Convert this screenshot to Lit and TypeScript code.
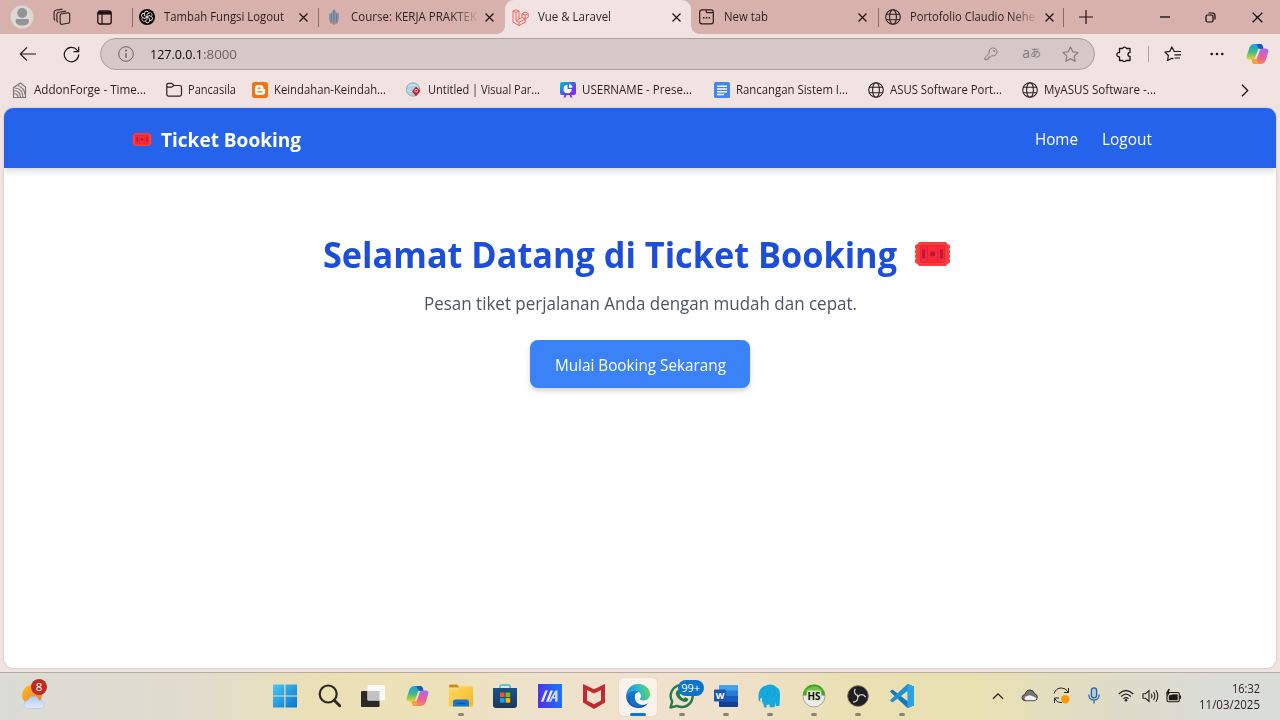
import { LitElement, html, css, svg } from "lit";
import { customElement, property } from "lit/decorators.js";

/** One line of text condensed or widened so that it fills a given width. */
@customElement("fit-text")
class FitText extends LitElement {
  @property({ type: Number }) w = 0;
  @property() text = "";
  static styles = css`
    :host { display: inline-block; white-space: pre; flex: none; }
    .t { display: inline-block; transform-origin: 0 50%; }
  `;
  render() {
    return html`<span class="t">${this.text}</span>`;
  }
  updated() {
    const el = this.renderRoot.querySelector(".t") as HTMLElement;
    const natural = el.offsetWidth ? el.getBoundingClientRect().width : this.w;
    el.style.transform = `scaleX(${this.w / natural})`;
    el.style.marginRight = this.w - natural + "px";
  }
}

const T = (text: string, w: number) => html`<fit-text .text=${text} .w=${w}></fit-text>`;
const I = (w: number, h: number, vb: string, body: unknown) =>
  html`<svg width=${w} height=${h} viewBox=${vb} fill="none">${body}</svg>`;

const cross = I(9, 9, "0 0 9 9", svg`<path d="M.5 .5l8 8M8.500 .5l-8 8" stroke="#1d1212" stroke-width="1.15"/>`);
const globe = I(16, 16, "0 0 16 16", svg`<g stroke="#2b2020" stroke-width="1.1"><circle cx="8" cy="8" r="7.300"/><ellipse cx="8" cy="8" rx="3.400" ry="7.300"/><path d="M1.300 5.300h13.400M1.300 10.700h13.400"/></g>`);
const openai = I(16, 16, "0 0 16 16", svg`<circle cx="8" cy="8" r="8" fill="#080606"/><g stroke="#e8dede" stroke-width=".9">${[0, 60, 120, 180, 240, 300].map((a) => svg`<path d="M8 7.900V5.200l2.200-1.300c2-.9 3.700 1.600 2.300 3.200" transform="rotate(${a} 8 8)"/>`)}</g>`);
const flame = I(16, 16, "0 0 16 16", svg`<path d="M8 0C9.500 2 11 3 11 4.500c1 0 1.800-.7 1.800-.7.600 4 .2 8-1.500 10.500L8 15.800l-3.300-1.500C3 12 2.700 8 3.300 4c.6.500 1.200.7 1.700.5C5.500 3 7 2 8 0z" fill="#8795a8"/><path d="M8 1v14M5.300 5v9M10.700 5v9" stroke="#65788f" stroke-width=".9"/><path d="M4 12c2 2 6 2 8 0l-1 2.500-3 1.300-3-1.300z" fill="#b1878b"/>`);
const laravel = I(17, 17, "0 0 17 17", svg`<path d="M1 2l3-1.300L7 2v8l3-1.600V4.700L13.200 3l3 1.600v3.700L13.200 10v3.200L7 16.500l-6-3.300zM1 2l3 1.500L7 2M4 3.500v8.300L7 10M4 11.800l3 1.500 6.200-3.300M7 13.300v3.200M10 4.700l3.200 1.700 3-1.800M13.200 6.400V10M10 8.400l3.200 1.600" stroke="#f0625d" stroke-width="1"/>`);
const newtab = I(15, 16, "0 0 15 16", svg`<g stroke="#2b1c1b" stroke-width="1.200"><rect x=".7" y=".9" width="13.600" height="13.900" rx="2.300"/><path d="M7.300 1v1.800q0 .9 .9 .9h6"/></g><path d="M4 8.800h1.500M6.800 8.800h1.500M9.600 8.800h1.500" stroke="#1d1212" stroke-width="1.600"/>`);

const tabs = [
  { icon: openai, text: "Tambah Fungsi Logout", w: 120, cls: "sep" },
  { icon: flame, text: "Course: KERJA PRAKTEK", w: 126, cls: "sep fade" },
  { icon: laravel, text: "Vue & Laravel", w: 73, cls: "active" },
  { icon: newtab, text: "New tab", w: 44, cls: "" },
  { icon: globe, text: "Portofolio Claudio Nehe", w: 125, cls: "sep fade" },
];

const addon = I(16, 17, "0 0 16 17", svg`<path d="M1.500 5.500L8.500 1l5 4v10.500h-12zM2 8.500c4 0 6.500 3 6.500 7M2 11.500c2.500 0 4 1.500 4 4M3 6c5 0 8 4 8 9.500M6 3.500c4 1.500 6.500 5 7 9" stroke="#807876" stroke-width="1.200"/>`);
const folder = I(17, 16, "0 0 17 16", svg`<path d="M.8 4.500V3q0-1.700 1.700-1.700h3.200L8 3.500h5.700q1.800 0 1.800 1.800v7q0 1.800-1.800 1.800H2.600Q.8 14.100.8 12.300zM.8 5.200h4.700L8 3.500" stroke="#2b2020" stroke-width="1.200"/>`);
const blogger = I(16, 16, "0 0 16 16", svg`<rect width="16" height="16" rx="2.500" fill="#f5720f"/><path d="M5.800 3h2.600c2 0 3 1.300 3 3 0 .9.300 1.100 1 1.100.5 0 .7.300.7.700v2.300c0 1.800-1.300 3-3 3H5.900c-1.800 0-3-1.200-3-3V6c0-1.800 1.200-3 2.900-3z" fill="#fff"/><path d="M5.900 6.200h2.300M5.900 9.800h4" stroke="#f5720f" stroke-width="1.300" stroke-linecap="round"/>`);
const visual = I(16, 16, "0 0 16 16", svg`<circle cx="7" cy="7.500" r="6.700" fill="#a9d2e2" stroke="#7b98a6" stroke-width=".7"/><path d="M2 4.500c3-2 7-2 10 0M1 8c3 2 7 2 10 0" stroke="#d9eff6" stroke-width="1"/><path d="M10 4.500l4.500 4.200-4.500 5.500L6 9.500z" fill="#c8202c"/><circle cx="10.200" cy="8.700" r="1.700" fill="#f6d4d4"/><circle cx="10.200" cy="8.700" r=".9" fill="#b51b26"/>`);
const present = I(16, 16, "0 0 16 16", svg`<defs><linearGradient id="pr" x1="0" y1="0" x2=".8" y2="1"><stop stop-color="#0ec2d2"/><stop offset=".25" stop-color="#1897df"/><stop offset=".6" stop-color="#5848ec"/><stop offset="1" stop-color="#9a22ea"/></linearGradient></defs><path d="M2 0h12q2 0 2 2v9q0 2-2 2h-2.500l1 2.500H10.500L9.500 13h-3l-1 2.500H3.500l1-2.500H2q-2 0-2-2V2q0-2 2-2z" fill="url(#pr)"/><path d="M7.500 3v4h4.200a4.100 4.100 0 1 1-4.200-4z" fill="#fff"/><path d="M9 2.200a3.700 3.700 0 0 1 3.500 3.500H9z" fill="#fff"/>`);
const docs = I(16, 16, "0 0 16 16", svg`<rect width="16" height="16" rx="1.500" fill="#4285f4"/><path d="M3 4.200h10M3 7h10M3 9.800h10M3 12.500h7" stroke="#fff" stroke-width="1.400"/>`);

const marks = [
  { icon: addon, text: "AddonForge - Time...", w: 112, c: 154 },
  { icon: folder, text: "Pancasila", w: 48, c: 86 },
  { icon: blogger, text: "Keindahan-Keindah...", w: 112, c: 154 },
  { icon: visual, text: "Untitled | Visual Par...", w: 112, c: 154 },
  { icon: present, text: "USERNAME - Prese...", w: 110, c: 154 },
  { icon: docs, text: "Rancangan Sistem I...", w: 112, c: 154 },
  { icon: globe, text: "ASUS Software Port...", w: 112, c: 154 },
  { icon: globe, text: "MyASUS Software -...", w: 112, c: 154 },
];

const copilot = (id: string) => I(23, 22, "0 0 23 22", svg`<defs>
  <linearGradient id="${id}a" x1="0" y1="0" x2="0" y2="1"><stop stop-color="#1b9fe6"/><stop offset=".5" stop-color="#3cb98a"/><stop offset="1" stop-color="#e8d624"/></linearGradient>
  <linearGradient id="${id}b" x1=".6" y1="0" x2=".3" y2="1"><stop stop-color="#a66bee"/><stop offset=".5" stop-color="#ec5d9b"/><stop offset="1" stop-color="#f98c50"/></linearGradient></defs>
  <path d="M9 1h5.500q1.500 0 2 1.500L17.300 5h-2.800q-2 0-2.600 2L9.300 14.500q-.7 2-2.600 2H3.500Q0 16.500.7 13L3.300 5Q4.500 1 9 1z" fill="url(#${id}a)"/>
  <path d="M9 1h5.500q1.500 0 2 1.500L17.600 6h-3.300q-2-.2-2.600-2L11 1.800Q10.500 1 9 1z" fill="#1558c6"/>
  <path d="M14 21H8.500q-1.500 0-2-1.500L5.700 17h2.800q2 0 2.600-2l2.600-7.500q.7-2 2.600-2h3.200q3.500 0 2.800 3.500L19.700 17q-1.200 4-5.700 4z" fill="url(#${id}b)"/>
  <path d="M14 21H8.500q-1.500 0-2-1.500L5.400 16h3.300q2 .2 2.600 2l.7 2.200q.5.800 2 .8z" fill="#f8a13c"/>`);

const ticket = (w: number, h: number) => html`<svg width=${w} height=${h} viewBox="0 0 37 24" preserveAspectRatio="none">
  <path d="M5 0h27q1 2.500 4 3.500v2.700q-1.700 1 0 2.300v2.200q-1.700 1.200 0 2.400v2.300q-1.700 1.200 0 2.300v2.800q-3 1-4 3.500H5q-1-2.500-4-3.500v-2.800q1.700-1.100 0-2.300v-2.300q1.700-1.200 0-2.400V8.500q1.700-1.300 0-2.300V3.500q3-1 4-3.500z" fill="#fb3d3a"/>
  <rect x="6.500" y="3.500" width="24" height="17" rx="1.500" fill="#f52a3a" stroke="#d9243a" stroke-width=".8"/>
  <path d="M13.500 4v16M23.700 4v16" stroke="#d2203a" stroke-width=".7"/>
  <rect x="8.200" y="7.200" width="2.900" height="9.600" rx=".8" fill="#bb1739"/><rect x="26" y="7.200" width="2.900" height="9.600" rx=".8" fill="#bb1739"/><circle cx="18.600" cy="11.900" r="2.600" fill="#bb1739"/></svg>`;

const apps = [
  { dot: "", icon: I(24, 24, "0 0 24 24", svg`<defs><linearGradient id="wi" x1="0" y1="0" x2="1" y2="1"><stop stop-color="#4ac8f3"/><stop offset="1" stop-color="#0673cf"/></linearGradient></defs><path d="M0 .5h11.300v11H0zM12.500 .5H24v11H12.500zM0 12.500h11.300v11H0zM12.500 12.500H24v11H12.500z" fill="url(#wi)"/>`) },
  { dot: "", icon: I(24, 24, "0 0 24 24", svg`<g stroke="#2a2825" stroke-width="2.200" transform="translate(1.500 0)"><circle cx="9.700" cy="10" r="8.500"/><path d="M15.700 16.300l5.500 5.500" stroke-width="2.900" stroke-linecap="round"/></g>`) },
  { dot: "", icon: I(24, 24, "0 0 24 24", svg`<rect x="0" y="7" width="18.500" height="16" rx="1" fill="#2b2a29"/><rect x="6.500" y="1" width="17.500" height="15.500" rx="1" fill="#fafafa"/><path d="M6.500 7h12v9.500h-11q-1 0-1-1z" fill="#c4c3c1"/>`) },
  { dot: "", icon: copilot("tc") },
  { dot: "run", icon: I(24, 24, "0 0 24 24", svg`<defs><linearGradient id="fo" x1="0" y1="0" x2="1" y2="1"><stop stop-color="#ffdb62"/><stop offset="1" stop-color="#f8b522"/></linearGradient></defs><path d="M0 2q0-1.500 1.500-1.500H8l2.500 3H0z" fill="#cf8b06"/><path d="M0 4.500h8.500L11 2.200h11.500q1.500 0 1.500 1.500V21q0 1.500-1.500 1.500h-21Q0 22.500 0 21z" fill="url(#fo)"/><path d="M4 22.500V18q0-2.500 2.500-2.500h11Q20 15.500 20 18v4.500z" fill="#1179cf"/><path d="M7.500 19.500h9" stroke="#0c4c91" stroke-width="1.300"/>`) },
  { dot: "", icon: I(24, 25, "0 0 24 25", svg`<defs><linearGradient id="st" x1="0" y1="0" x2="0" y2="1"><stop stop-color="#1c5487"/><stop offset="1" stop-color="#1c3758"/></linearGradient></defs><path d="M7 5V2.500Q7 1 8.500 1h7Q17 1 17 2.500V5" stroke="#35b7dd" stroke-width="1.300"/><path d="M0 4h24v17q0 3-3 3H3q-3 0-3-3z" fill="url(#st)"/><path d="M7 8.500h4.600v4.600H7z" fill="#f35325"/><path d="M12.600 8.500h4.600v4.600h-4.600z" fill="#81bc06"/><path d="M7 14.100h4.600v4.600H7z" fill="#05a6f0"/><path d="M12.600 14.100h4.600v4.600h-4.600z" fill="#ffba08"/>`) },
  { dot: "", icon: I(24, 24, "0 0 24 24", svg`<defs><linearGradient id="my" x1="0" y1=".2" x2="1" y2="0"><stop stop-color="#4b36e8"/><stop offset="1" stop-color="#147cf5"/></linearGradient></defs><path d="M0 0h24v24H0z" fill="url(#my)"/><path d="M7.300 6.500h2.500L5.300 17.700H2.800zM12.500 6.500H15l-4.500 11.200H8z" fill="#e9ecff"/><path d="M17.200 6.500h2.300v11.200h-2.300v-3.200h-2.700l-1.400 3.200h-2.300zm0 3.500l-1.500 2.900h1.500z" fill="#d2dcff"/>`) },
  { dot: "", icon: I(22, 25, "0 0 22 25", svg`<path d="M0 0l11 5.300L22 0v18.500L11 25 0 18.500zM4 6v10.500l7 3.700 7-3.700V6l-7 3.600z" fill="#c02b32" fill-rule="evenodd"/>`) },
  { dot: "on", icon: I(24, 24, "0 0 24 24", svg`<defs><linearGradient id="ea" x1="0" y1=".5" x2="1" y2=".3"><stop stop-color="#1b91df"/><stop offset=".5" stop-color="#27b8d3"/><stop offset="1" stop-color="#66d655"/></linearGradient><linearGradient id="eb" x1="0" y1="0" x2="0" y2="1"><stop stop-color="#1a86d9"/><stop offset="1" stop-color="#0d459d"/></linearGradient></defs><path d="M.2 11C1 4.500 6 0 12 0c7 0 12 4.700 12 10 0 4-3 6.500-6.500 6.500-2.500 0-4-1-3.500-2 .8-1 1-1.700 1-2.500C15 9 12 6.300 8.500 6.300 4.500 6.300 1.500 8 .2 11z" fill="url(#ea)"/><path d="M.2 11C1.500 8 4.500 6.300 8.500 6.300c1.500 0 3 .5 4.300 1.500-3 1-4.800 3-4.800 6.200 0 5 4.500 7.500 9 7 2-.2 3.700-1 5-1.800C20 22 16.500 24 12.300 24 5 24-.6 18 .2 11z" fill="url(#eb)"/><path d="M9.200 11C7.600 17 12 20.800 17 21c-3 3-9.500 2.500-12.500-1.500S4.500 11 9.200 11z" fill="#1470c7"/>`) },
  { dot: "run", badge: true, icon: I(26, 26, "0 0 26 26", svg`<path d="M1.500 24.500l1.700-6A11 11 0 1 1 8 22.900z" stroke="#217c48" stroke-width="2.400" stroke-linejoin="round"/><path d="M8.500 7.300l1.700-.2 1.400 3.200-1 1.500c1 2 2.300 3 4 3.900l1.600-1.500 3.200 1.500c0 2.200-1.800 3.500-3.800 3.200-4.600-.8-8.500-4.700-8.700-8.600 0-1.300.6-2.200 1.600-3z" fill="#217c48"/>`) },
  { dot: "run", icon: I(24, 24, "0 0 24 24", svg`<rect x="5" y="1" width="19" height="22" rx="1.500" fill="#2b7cd3"/><path d="M5 2.500Q5 1 6.500 1h16Q24 1 24 2.500V6.500H5z" fill="#41a5ee"/><path d="M5 12h19v5.500H5z" fill="#185abd"/><path d="M5 17.500h19v4q0 1.500-1.500 1.500h-16Q5 23 5 21.500z" fill="#103f91"/><rect y="5.500" width="12" height="12" rx="1" fill="#1b56b5"/><text x="6" y="14.800" text-anchor="middle" font-family="Open Sans, sans-serif" font-weight="700" font-size="9" fill="#fff">W</text>`) },
  { dot: "run", icon: I(24, 24, "0 0 24 24", svg`<path d="M8 1.500C11 0 15.500.3 18 3c3 1 4.200 4 4 8l-.5 11h-3.800v-3.500l-1.200 4.800h-4.500l-1-3.300-1 1-1.200-.5-.3 3H6l-.5-3c-1.500-1.500-1.600-4-1.500-7-2.500 1-2.300 4-.5 5-2.700-.5-3.500-3-3-6.500C.8 7 2.500 3 8 1.500z" fill="#18a9dc"/><path d="M6 4c-3 4-1.500 8 1.200 9.300C9 13 10 10 9 6.500M15 3c3 4 2.800 8-1 9.500" stroke="#1497cb" stroke-width=".8"/>`) },
  { dot: "run", icon: I(24, 24, "0 0 24 24", svg`<circle cx="12" cy="12" r="11" fill="#ececea" stroke="#92978a" stroke-width=".8"/><path d="M1 11.500a11 11 0 0 1 22 0z" fill="#44a41d"/><path d="M3 7q9-9 18 0z" fill="#71c345"/><rect x="4.500" y="6.500" width="15" height="10.500" rx="3" fill="#dceacb"/><text x="12" y="15.800" text-anchor="middle" font-family="Open Sans, sans-serif" font-weight="700" font-size="10" textLength="13" lengthAdjust="spacingAndGlyphs" fill="#111">HS</text>`) },
  { dot: "run", icon: I(22, 22, "0 0 22 22", svg`<circle cx="11" cy="11" r="10.300" fill="#1f1e20" stroke="#635f5b" stroke-width=".9"/><g stroke="#d2d0cf" stroke-width="1.300" stroke-linecap="round"><path d="M11 10.500C8 10 6.500 7 8 4.200"/><path d="M11 10.500C8 10 6.500 7 8 4.200" transform="rotate(120 11 11)"/><path d="M11 10.500C8 10 6.500 7 8 4.200" transform="rotate(240 11 11)"/></g>`) },
  { dot: "run", icon: I(24, 24, "0 0 24 24", svg`<path d="M17.500 0L24 2.800v18.400L17.500 24 1 8.700 0 7.300 2.500 5.500 18 17.500z" fill="#1279bd"/><path d="M17.500 24L24 21.200V2.800L17.500 0 1 15.300 0 16.700l2.500 1.800L18 6.500v11z" fill="#1e91d3"/><path d="M17.500 0L24 2.800v18.400L17.500 24z" fill="#2ba2e3"/>`) },
];

@customElement("app-root")
class AppRoot extends LitElement {
  static styles = css`
    :host { display: flex; flex-direction: column; width: 1280px; height: 720px; overflow: hidden; background: #f0e3e2; font-family: "Open Sans", "Noto Sans", sans-serif; font-size: 12px; color: #2a1f1e; }
    * { box-sizing: border-box; }
    svg { display: block; flex: none; }
    .strip { display: flex; height: 34px; background: #d8b1ac; align-items: stretch; }
    .lead { width: 131.500px; display: flex; align-items: center; padding-left: 10px; }
    .lead svg + svg { margin-left: 19px; }
    .lead svg:last-child { margin-left: 26px; }
    .tab { width: 186.500px; display: flex; align-items: center; padding-left: 7.500px; position: relative; }
    .tab.sep::before { content: ""; position: absolute; left: 0; top: 8px; height: 19px; width: 1px; background: #8a6d69; }
    .tab .ic { width: 17px; margin-right: 8px; }
    .tab .lb { width: 128px; line-height: 20px; display: flex; }
    .fade .lb { -webkit-mask-image: linear-gradient(90deg, #000 78%, transparent 101%); mask-image: linear-gradient(90deg, #000 78%, transparent 101%); }
    .tab .x { margin-left: 6.500px; }
    .active { background: #f0e3e2; border-radius: 9px 9px 0 0; }
    .active .lb { padding-left: .5px; }
    .active::before, .active::after { content: ""; position: absolute; bottom: 0; width: 8px; height: 8px; }
    .active::before { left: -8px; background: radial-gradient(circle at 0 0, #d8b1ac 7.500px, #f0e3e2 8px); }
    .active::after { right: -8px; background: radial-gradient(circle at 100% 0, #d8b1ac 7.500px, #f0e3e2 8px); }
    .win { flex: 1; display: flex; align-items: center; padding-left: 15px; position: relative; }
    .win::before { content: ""; position: absolute; left: -1px; top: 8px; height: 19px; width: 1px; background: #8a6d69; }
    .win svg:nth-child(2) { margin-left: 67px; }
    .win svg:nth-child(3) { margin-left: 35px; }
    .win svg:nth-child(4) { margin-left: 36px; }
    .bar { display: flex; height: 40px; align-items: center; padding-left: 19px; }
    .bar .rl { margin-left: 26px; }
    .url { width: 995px; height: 32px; margin-left: 20px; border: 1px solid #ac9fa0; border-radius: 16px; background: #d5c8c7; display: flex; align-items: center; padding: 0 15px 0 17px; font-size: 13.300px; color: #0d0909; }
    .url .addr { display: flex; margin-left: 16px; flex: 1; }
    .port { color: #6e6363; }
    .aa { color: #81787a; font-size: 14px; font-family: "Open Sans", "Noto Sans CJK JP", sans-serif; display: flex; margin: -3px 21px 0 24px; }
    .aa small { font-size: 11px; line-height: 20px; }
    .tools { display: flex; align-items: center; margin-left: 21px; }
    .bar .div { width: 1px; height: 16px; background: #aea3a2; margin: 0 15px 0 15px; }
    .more { margin: 0 22px 0 28px; }
    .marks { display: flex; height: 34px; align-items: center; padding: 0 0 2px 12px; }
    .mark { display: flex; align-items: center; }
    .mark fit-text { margin-top: -1px; }
    .mark .ic { width: 22px; }
    .marks .end { margin-left: 65px; }
    .page { height: 560px; margin: 0 4px; background: #fff; border-radius: 9px; overflow: hidden; box-shadow: 0 0 1px 1px #ded0ce; }
    .nav { height: 60px; background: #2563eb; color: #fff; display: flex; align-items: center; padding: 2px 124px 0 128px; box-shadow: 0 3px 6px rgba(0,0,0,.15); font-size: 16px; }
    .brand { font-weight: 700; font-size: 19.700px; display: flex; align-items: center; gap: 9px; flex: 1; }
    .links { display: flex; gap: 24px; }
    .hero { display: flex; flex-direction: column; align-items: center; padding-top: 60px; }
    h1 { margin: 0; color: #1d4ed8; font-size: 35.500px; line-height: 52px; font-weight: 700; display: flex; align-items: center; gap: 17px; padding-right: 6px; }
    p { margin: 9px 0 0; color: #4b5563; font-size: 17.800px; line-height: 28px; }
    .btn { margin-top: 23px; width: 220px; height: 48px; border-radius: 8px; background: #3b82f6; color: #fff; display: flex; align-items: center; justify-content: center; font-size: 16px; padding: 2px 0 0 1px; box-shadow: 0 3px 5px rgba(0,0,0,.17); }
    .task { margin-top: 4px; height: 48px; border-top: 1px solid #b8aba4; display: flex; background: linear-gradient(90deg, #dadcd5 0, #e0dcce 15%, #ebe0b5 25%, #ece1b8 34%, #efe2cd 42%, #f0e1cd 56%, #eae0b4 66%, #e9e0b0 76%, #dddcca 88%, #dadcd8 96%); }
    .wx { width: 263px; padding: 6px 0 0 21px; }
    .badge { font-size: 11.500px; fill: #fff; }
    .app { width: 44.080px; position: relative; display: flex; justify-content: center; align-items: center; padding-bottom: 1px; }
    .app.on::before { content: ""; position: absolute; left: 3px; top: 5px; width: 38px; height: 38px; border-radius: 4px; background: #f8f2e8; box-shadow: 0 0 1px #b9ab98; }
    .app svg { position: relative; }
    .app.run::after, .app.on::after { content: ""; position: absolute; bottom: 4px; width: 6px; height: 3px; border-radius: 2px; background: #8c8273; }
    .app.on::after { width: 16px; background: #0c76cc; }
    .pill { position: absolute; left: 18px; top: 7px; width: 26px; height: 16px; border-radius: 8px; background: #0b74c9; color: #fff; font-size: 11px; line-height: 15px; text-align: center; }
    .tray { flex: 1; display: flex; align-items: center; padding: 0 20px 2px 68px; }
    .tray .od { margin-left: 17px; }
    .tray .sync { margin-left: 15px; }
    .tray .mic, .tray .wifi { margin-left: 18px; }
    .tray .vol { margin-left: 8px; }
    .tray .bat { margin-left: 6px; }
    .tray .clock { margin-left: auto; line-height: 16px; font-size: 11.800px; display: flex; flex-direction: column; align-items: flex-end; }
  `;

  render() {
    return html`
      <div class="strip">
        <div class="lead">
          ${I(24, 24, "0 0 24 24", svg`<circle cx="12" cy="12" r="11.500" fill="#dcd8d5"/><circle cx="12.200" cy="8" r="5" fill="#949494"/><path d="M5.500 15.500q0-1.500 1.500-1.500h10.500q1.500 0 1.500 1.500 0 5-6.700 5t-6.800-5z" fill="#949494"/>`)}
          ${I(18, 18, "0 0 18 18", svg`<g stroke="#33211f" stroke-width="1.150" stroke-linejoin="round"><path d="M8.700 5.700l6.300-.8q1.700-.1 1.700 1.500v7q0 1.600-1.600 1.900l-6 1q-1.800.2-1.900-1.600l-.1-7q0-1.700 1.600-2z"/><path d="M5 14.300q-1-.3-1.100-1.600V6.300q0-1.800 1.700-2.100L13 3.100M2.200 12.300q-1-.4-1.100-1.700V4.300q0-1.700 1.600-2.100L9.500 1.100"/></g>`)}
          ${I(15, 15, "0 0 15 15", svg`<rect x=".8" y="1" width="13.400" height="13" rx="2.300" stroke="#1d1111" stroke-width="1.300"/><path d="M1 3h13" stroke="#1d1111" stroke-width="3.200"/><path d="M5 4v10" stroke="#1d1111" stroke-width="1.200"/>`)}
        </div>
        ${tabs.map((t) => html`<div class="tab ${t.cls}"><div class="ic">${t.icon}</div><div class="lb">${T(t.text, t.w)}</div><div class="x">${cross}</div></div>`)}
        <div class="win">
          ${I(14, 14, "0 0 14 14", svg`<path d="M7 0v14M0 7h14" stroke="#1d1212" stroke-width="1.200"/>`)}
          ${I(10, 10, "0 0 10 10", svg`<path d="M0 5h10" stroke="#0d0909" stroke-width="1.300"/>`)}
          ${I(11, 11, "0 0 11 11", svg`<rect x="1" y="3" width="7" height="7" rx="1.500" stroke="#0d0909" stroke-width="1.200"/><path d="M3.500 1h3.700Q10 1 10 3.800v3.700" stroke="#0d0909" stroke-width="1.200"/>`)}
          ${I(11, 11, "0 0 11 11", svg`<path d="M.7 .7l9.600 9.600M10.300 .7L.7 10.300" stroke="#0d0909" stroke-width="1.300"/>`)}
        </div>
      </div>
      <div class="bar">
        ${I(18, 16, "0 0 18 16", svg`<path d="M17 8H1.500M8 1.300L1.300 8 8 14.700" stroke="#1d1515" stroke-width="1.200"/>`)}
        <span class="rl">${I(17, 17, "0 0 17 17", svg`<path d="M15.700 8.500A7.200 7.200 0 1 1 13.900 3.800L15.500 5.500M15.700 .7v5H10.500" stroke="#1d1515" stroke-width="1.200"/>`)}</span>
        <div class="url">
          ${I(16, 16, "0 0 16 16", svg`<circle cx="8" cy="8" r="7.300" stroke="#6c6262" stroke-width="1"/><path d="M8 7v5" stroke="#5c5252" stroke-width="1.200"/><circle cx="8" cy="4.500" r=".9" fill="#5c5252"/>`)}
          <span class="addr">${T("127.0.0.1", 53)}<span class="port">${T(":8000", 34)}</span></span>
          ${I(14, 14, "0 0 14 14", svg`<path d="M5.300 6.300A4 4 0 1 1 7.700 8.700L6.500 9.800H5.200v1.400H3.800v1.500H.9V10.700z" stroke="#81787a" stroke-width="1"/><circle cx="10" cy="4" r=".9" fill="#81787a"/>`)}
          <span class="aa">a<small>あ</small></span>
          ${I(17, 16, "0 0 17 16", svg`<path d="M8.500 1l2.300 4.700 5.200.8-3.800 3.600.9 5.200-4.600-2.500-4.600 2.500.9-5.200L1 6.500l5.200-.8z" stroke="#81787a" stroke-width="1.100" stroke-linejoin="round"/>`)}
        </div>
        <div class="tools">
          ${I(17, 17, "0 0 17 17", svg`<path d="M3.500 2.500h3a2.100 2.100 0 0 1 4 0h3.500v4a2 2 0 1 0 0 4v4h-4a2 2 0 0 1-3.500 0h-3v-3.700a2.200 2.200 0 1 1 0-4.300z" stroke="#1d1515" stroke-width="1.300" stroke-linejoin="round"/>`)}
          <span class="div"></span>
          ${I(18, 16, "0 0 18 16", svg`<path d="M9.500 5.500H17M10.500 8.800H17M10.500 12H16" stroke="#1d1515" stroke-width="1.200"/><path d="M10 4.900L7.800 1 5.800 5.400.9 6l3.500 3.500-.8 5 4.300-2.300 1.500.8" stroke="#1d1515" stroke-width="1.200" stroke-linejoin="round"/>`)}
          <span class="more">${I(14, 4, "0 0 14 4", svg`<g fill="#1d1515"><circle cx="1.700" cy="2" r="1.300"/><circle cx="7" cy="2" r="1.300"/><circle cx="12.300" cy="2" r="1.300"/></g>`)}</span>
          ${copilot("bc")}
        </div>
      </div>
      <div class="marks">
        ${marks.map((m) => html`<div class="mark" style="width:${m.c}px"><span class="ic">${m.icon}</span>${T(m.text, m.w)}</div>`)}
        <span class="end">${I(8, 13, "0 0 8 13", svg`<path d="M1 .8l5.700 5.700L1 12.200" stroke="#1d1515" stroke-width="1.300"/>`)}</span>
      </div>
      <div class="page">
        <div class="nav">
          <div class="brand">${ticket(20, 13)}${T("Ticket Booking", 140)}</div>
          <div class="links">${T("Home", 43)}${T("Logout", 50)}</div>
        </div>
        <div class="hero">
          <h1>${T("Selamat Datang di Ticket Booking", 574)}${ticket(37, 24)}</h1>
          <p>${T("Pesan tiket perjalanan Anda dengan mudah dan cepat.", 433)}</p>
          <div class="btn">${T("Mulai Booking Sekarang", 171)}</div>
        </div>
      </div>
      <div class="task">
        <div class="wx">${I(28, 32, "0 0 28 32", svg`<defs><linearGradient id="su" x1="0" y1="0" x2="1" y2="1"><stop stop-color="#f7bd32"/><stop offset="1" stop-color="#ef7a1c"/></linearGradient><linearGradient id="cl" x1="0" y1="0" x2="0" y2="1"><stop stop-color="#b2caf3"/><stop offset="1" stop-color="#e0ebfc"/></linearGradient></defs><circle cx="11" cy="16" r="10" fill="url(#su)"/><path d="M7 29.500q-4-.3-4-4t4-4.300q1.500-4 5.500-4t5.500 4q5 0 5 4.200T19 29.500z" fill="url(#cl)" stroke="#a3b9e8" stroke-width=".5"/><circle cx="18" cy="8" r="8" fill="#bf2b22"/><text class="badge" x="18" y="12.200" text-anchor="middle">8</text>`)}</div>
        ${apps.map((a) => html`<div class="app ${a.dot}">${a.icon}${a.badge ? html`<span class="pill">99+</span>` : ""}</div>`)}
        <div class="tray">
          <svg width="12" height="8" viewBox="0 0 12 8" fill="none"><path d="M1 6.800l5-5 5 5" stroke="#26231f" stroke-width="1.300"/></svg>
          <svg class="od" width="17" height="13" viewBox="0 0 17 13" fill="none"><path d="M4 11.700q-3-.3-3-3t3-3.200Q5 1 9 1q3.500 0 4.700 3.800Q16.300 5.500 16.300 8.300t-3 3.400z" fill="#767779" stroke="#39393a"/><path d="M5 11.300q-1.500-.7-1.500-2Q4 7 6.500 7q2-1.500 4-.2l5 2.200q-.5 2.300-2.500 2.300z" fill="#eef0f5"/></svg>
          <svg class="sync" width="17" height="17" viewBox="0 0 17 17" fill="none"><path d="M1 6.500Q3 1 8.500 1q4.500 0 6.500 4M15.500 1v4.500H11M1.500 16v-5H6M1.800 11.500Q4 16 9 15.500" stroke="#292620" stroke-width="1"/><circle cx="12.300" cy="12.300" r="4.200" fill="#fa9a0b"/></svg>
          <svg class="mic" width="12" height="17" viewBox="0 0 12 17" fill="none"><rect x="3.400" y=".8" width="5.200" height="10" rx="2.600" stroke="#2160ad" stroke-width="1.300" fill="#b9cbd0"/><path d="M.8 7.500q0 5.500 5.200 5.500t5.200-5.500M6 13v3.500" stroke="#2160ad" stroke-width="1.200"/></svg>
          <svg class="wifi" width="16" height="13" viewBox="0 0 16 13" fill="none"><path d="M.8 5Q8-2 15.200 5M3.200 7.500Q8 2.700 12.800 7.500M5.500 9.800Q8 7.300 10.500 9.800" stroke="#26231f" stroke-width="1.200"/><circle cx="8" cy="11.300" r="1.300" fill="#26231f"/></svg>
          <svg class="vol" width="17" height="14" viewBox="0 0 17 14" fill="none"><path d="M1 4.700h2.500L7 1.500v11L3.500 9.300H1zM9.300 4.800q1.400 2.200 0 4.400M11.500 3q2.700 4 0 8M13.800 1.300q4 5.700 0 11.400" stroke="#26231f" stroke-width="1.100"/></svg>
          <svg class="bat" width="17" height="14" viewBox="0 0 17 14" fill="none"><rect x="2" y="3.500" width="12.300" height="9.300" rx="1.500" stroke="#1d1b18" stroke-width="1.100"/><path d="M3.800 6.500L8 5.200h4.700v6H3.800zM14.500 6.500H16v3.200h-1.500z" fill="#1d1b18"/><path d="M3.300 0L.8 4.500h1.800L1.800 8l3.400-4.500H3.500L5 0z" fill="#1d1b18"/></svg>
          <div class="clock">${T("16:32", 28)}${T("11/03/2025", 61)}</div>
        </div>
      </div>
    `;
  }
}
